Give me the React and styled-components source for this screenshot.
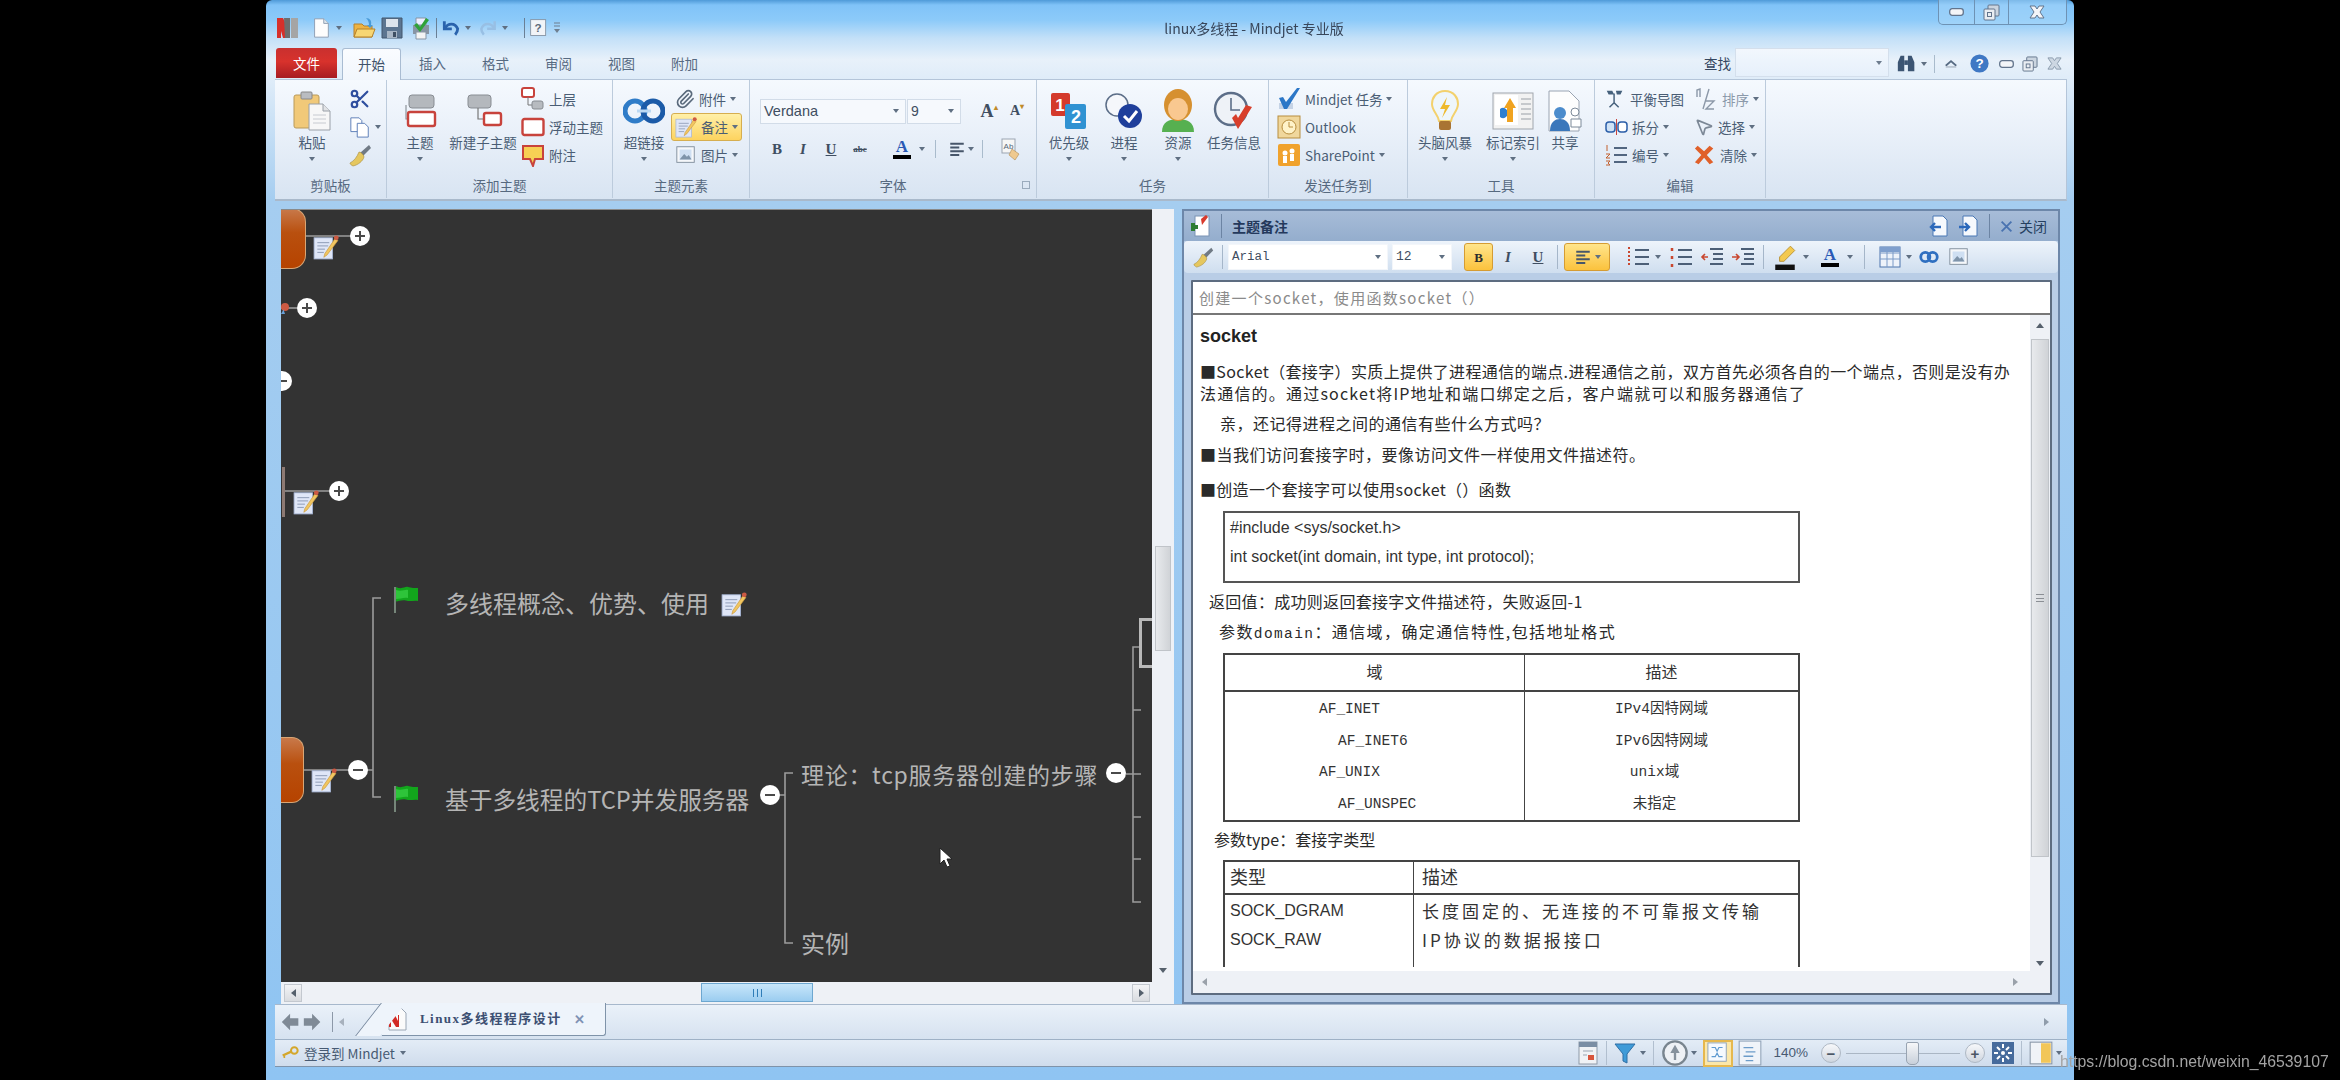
import React from 'react';
import styled, { createGlobalStyle } from 'styled-components';
import { Scissors, Paperclip, MousePointer2 } from 'lucide-react';

const CJK = `"Noto Sans CJK SC", "Noto Sans", sans-serif`;

const Global = createGlobalStyle`
  html, body { margin: 0; padding: 0; background: #000; }
  body { width: 2340px; height: 1080px; overflow: hidden; font-family: ${CJK}; }
  * { box-sizing: border-box; }
`;

const Page = styled.div`
  position: relative; width: 2340px; height: 1080px; background: #000; padding-left: 266px; overflow: hidden;
`;
const Watermark = styled.div`
  position: absolute; left: 2060px; top: 1050px; font: 15.8px/24px "Liberation Sans", sans-serif; color: #a3a3a3; filter: blur(.5px);
`;
const Win = styled.div`
  width: 1808px; height: 1080px; display: flex; flex-direction: column; border-radius: 6px 6px 0 0; filter: blur(.55px);
  background: linear-gradient(180deg, #4f9ad8 0, #80c3f8 5px, #8ccaf9 20px, #c3e0f8 38px, #e8f1fa 60px, #a5cdf0 200px, #8fc4f2 100%);
  padding: 0 7px 0 9px;
`;

/* ---------- title ---------- */
const TitleBar = styled.div`height: 48px; display: flex; align-items: center; padding-top: 8px; flex: none;`;
const Qat = styled.div`width: 295px; display: flex; align-items: center; gap: 4px; padding-left: 1px; flex: none;`;
const QSep = styled.i`width: 1px; height: 20px; background: #6a7f95; flex: none;`;
const TinyArrow = styled.span`
  width: 0; height: 0; border-left: 3px solid transparent; border-right: 3px solid transparent; border-top: 4px solid ${p => p.$c || '#5f6f82'};
  flex: none; display: inline-block; margin: ${p => p.$m || '0'};
`;
const WinTitle = styled.div`flex: 1; text-align: center; font: 14px/20px ${CJK}; color: #38465a;`;
const WinBtns = styled.div`
  width: 129px; height: 25px; align-self: flex-start; margin-top: -8px; flex: none; display: flex;
  border: 1px solid #6e92b4; border-top: 0; border-radius: 0 0 5px 5px;
  background: rgba(170,215,250,.5);
`;
const WinBtn = styled.div`
  flex: ${p => p.$w || 1}; display: flex; align-items: center; justify-content: center; border-left: ${p => p.$first ? '0' : '1px solid #6e92b4'};
`;

/* ---------- tabs ---------- */
const TabRow = styled.div`height: 31px; display: flex; align-items: stretch; flex: none; padding-left: 1px;`;
const FileTab = styled.div`
  width: 61px; height: 30px; background: linear-gradient(180deg, #c9302f, #d8322c 45%, #a71c22); color: #fff; font: 13.5px/30px ${CJK};
  text-align: center; border-radius: 3px 3px 0 0; margin-right: 5px;
`;
const Tab = styled.div`
  width: ${p => p.$active ? 59 : 63}px; text-align: center; font: 13.5px/30px ${CJK}; color: ${p => p.$active ? '#40526a' : '#566a82'};
  ${p => p.$active ? `background: linear-gradient(180deg,#fafcff,#f1f6fc); border: 1px solid #a9bcd2; border-bottom: 0; border-radius: 3px 3px 0 0; position: relative; z-index: 1; height: 32px;` : ''}
`;
const TabSpacer = styled.div`flex: 1;`;
const SearchLabel = styled.div`font: 13.5px/30px ${CJK}; color: #34465f; margin-right: 4px;`;
const SearchBox = styled.div`
  width: 154px; height: 29px; background: linear-gradient(180deg,#f2f7fd,#e6f0fb); border: 1px solid #d4dfec; display: flex; align-items: center; justify-content: flex-end; padding-right: 6px;
`;
const RightTools = styled.div`width: 178px; display: flex; align-items: center; padding-left: 7px; flex: none; gap: 0;`;
const VLine = styled.i`width: 1px; height: ${p => p.$h || 18}px; background: ${p => p.$c || '#a9bbcc'}; margin: ${p => p.$m || '0 8px'}; flex: none;`;
const Gap = styled.span`width: ${p => p.$w}px; flex: none;`;

/* ---------- ribbon ---------- */
const Ribbon = styled.div`
  width: 1792px; height: 122px; flex: none; display: flex; background: linear-gradient(180deg, #f5f9fe 0, #e9f0f9 45%, #d8e4f2 100%);
  border: 1px solid #b4c5d9; border-left: 0; border-bottom: 2px solid #a9b9cb;
`;
const Group = styled.div`
  width: ${p => p.$w}px; flex: none; display: flex; flex-direction: column; border-right: 1px solid ${p => p.$end ? 'transparent' : '#bccbdc'}; margin-bottom: 1px;
`;
const GroupBody = styled.div`flex: 1; display: flex; padding-left: ${p => p.$pl || 0}px; gap: ${p => p.$gap || 0}px;`;
const GroupLabel = styled.div`height: 24px; font: 13.5px/22px ${CJK}; text-align: center; color: #56697f; position: relative; margin-bottom: 0;`;
const Launcher = styled.span`position: absolute; right: 6px; top: 7px; width: 8px; height: 8px; border: 1px solid #9aabbd;`;
const Large = styled.div`
  width: ${p => p.$w}px; flex: none; display: flex; flex-direction: column; align-items: center; padding-top: 11px;
`;
const LargeIcon = styled.div`height: 40px; display: flex; align-items: center; justify-content: center;`;
const LargeText = styled.div`font: 13.5px/22px ${CJK}; color: #4a5d74; white-space: nowrap;`;
const LargeArrow = styled.div`height: 12px; display: flex; align-items: center;`;
const Stack = styled.div`width: ${p => p.$w ? p.$w + 'px' : 'auto'}; flex: none; display: flex; flex-direction: column; padding-top: 5px; margin-left: ${p => p.$ml || 0}px;`;
const Small = styled.div`
  height: 28px; display: flex; align-items: center; gap: 4px; font: 13.5px/20px ${CJK}; color: ${p => p.$dim ? '#8b99aa' : '#4a5d74'}; white-space: nowrap; position: relative;
  ${p => p.$hl ? `background: linear-gradient(180deg,#fff0a8,#fdd35f); border: 1px solid #d6ae50; border-radius: 3px; padding: 0 3px; margin-left: -4px; height: 28px;` : ''}
`;
const FontCol = styled.div`display: flex; flex-direction: column; padding: 18px 0 0 10px;`;
const FontRow = styled.div`display: flex; align-items: center; height: 26px;`;
const FontRow2 = styled(FontRow)`margin-top: 12px; padding-left: 4px;`;
const Combo = styled.div`
  width: ${p => p.$w}px; height: ${p => p.$h || 25}px; background: ${p => p.$bg || '#f6f9fd'}; border: 1px solid ${p => p.$bd || '#d2dce8'}; display: flex; align-items: center; justify-content: space-between;
  padding: 0 6px 0 3px; font: ${p => p.$fs || 14}px/20px ${p => p.$font || '"Liberation Sans", sans-serif'}; color: #3f4e61; margin-right: ${p => p.$mr ?? 1}px; flex: none;
`;
const Letter = styled.span`
  width: ${p => p.$w || 26}px; text-align: center; flex: none; font: ${p => p.$i ? 'italic' : ''} bold ${p => p.$fs || 15}px/20px "Liberation Serif", serif; color: ${p => p.$c || '#3f4e61'};
  margin-left: ${p => p.$ml || 0}px;
  text-decoration: ${p => p.$u ? 'underline' : 'none'}; ${p => p.$s ? 'text-decoration: line-through; font-size: 9px;' : ''}
`;
const Sup = styled.sup`font-size: 8px; line-height: 0; color: #c08a2a;`;
const ColorA = styled.span`
  display: inline-flex; flex-direction: column; align-items: center; width: 18px; font: bold 17px/15px "Liberation Serif", serif; color: #2a59b5; flex: none;
  &::after { content: ''; width: 18px; height: 4px; background: ${p => p.$bar || '#000'}; margin-top: 1px; }
`;

/* ---------- main ---------- */
const Main = styled.div`
  height: 795px; flex: none; margin: 8px 0 0 6px; width: 1785px; display: flex; gap: 8px;
`;
const MapPane = styled.div`width: 893px; height: 795px; flex: none; display: flex; flex-direction: column; background: #eef0f5;`;
const MapTop = styled.div`height: 773px; display: flex; flex: none;`;
const Canvas = styled.div`
  position: relative; width: 871px; height: 773px; background: #333333; overflow: hidden; border-top: 1px solid #8a8a8a; flex: none;
`;
const Lines = styled.svg`position: absolute; left: 0; top: 0;`;
const VScroll = styled.div`
  width: ${p => p.$w}px; flex: none; background: #eef1f6; display: flex; flex-direction: column; align-items: center; position: relative;
  padding-top: ${p => p.$pt}px;
`;
const Thumb = styled.div`
  width: ${p => p.$w}px; height: ${p => p.$h}px; flex: none; background: linear-gradient(90deg,#e8eaed,#d0d3d7); border: 1px solid #c0c4c9; display: flex; align-items: center; justify-content: center;
  margin-bottom: auto;
`;
const Grip = styled.i`width: 8px; height: 8px; border-top: 1px solid #8b8f95; border-bottom: 1px solid #8b8f95; position: relative;
  &::after { content: ''; position: absolute; left: 0; right: 0; top: 3px; height: 1px; background: #8b8f95; }
`;
const Arrow = styled.i`
  width: 0; height: 0; flex: none; margin-bottom: ${p => p.$mb || 0}px;
  border-left: 4px solid transparent; border-right: 4px solid transparent;
  ${p => p.$up ? 'border-bottom' : 'border-top'}: 5px solid #55606c;
`;
const HScroll = styled.div`
  height: ${p => p.$h}px; flex: none; background: #eef1f6; display: flex; align-items: center; padding: 0 ${p => p.$pr}px 0 ${p => p.$pl}px; position: relative; justify-content: space-between;
`;
const HBtn = styled.div`
  width: 18px; height: 18px; background: linear-gradient(180deg,#f3f4f6,#d9dce0); border: 1px solid #c3c8cf; display: flex; align-items: center; justify-content: center; flex: none;
`;
const HArrow = styled.i`
  width: 0; height: 0; flex: none; border-top: 4px solid transparent; border-bottom: 4px solid transparent;
  ${p => p.$left ? 'border-right' : 'border-left'}: 5px solid ${p => p.$c || '#55606c'};
`;
const HThumb = styled.div`
  position: absolute; left: 420px; top: 1px; width: 112px; height: 19px; background: linear-gradient(180deg,#c8e6fa,#9bcdf0); border: 1px solid #6da7d0; display: flex; align-items: center; justify-content: center;
`;
const Grip2 = styled.i`width: 9px; height: 8px; border-left: 1px solid #2f7db8; border-right: 1px solid #2f7db8; position: relative;
  &::after { content: ''; position: absolute; top: 0; bottom: 0; left: 3px; width: 1px; background: #2f7db8; }
`;

/* canvas items: free-placed map nodes */
const At = styled.div.attrs(p => ({ style: { left: p.$x, top: p.$y } }))`
  position: absolute; transform: translateY(-50%); line-height: 0;
`;
const Topic = styled.div.attrs(p => ({ style: { left: p.$x, top: p.$y } }))`
  position: absolute; transform: translateY(-50%); white-space: nowrap; color: #b5b5b5;
  font: ${p => p.$fs || 24}px/32px ${CJK}; letter-spacing: ${p => p.$ls || 0}px;
`;
const Root = styled.div.attrs(p => ({ style: { top: p.$y, width: p.$w, height: p.$h } }))`
  position: absolute; left: 0; background: linear-gradient(180deg,#c8794a,#b9500f 40%,#b64300);
  border: 1px solid #d9a675; border-left: 0; border-radius: 0 ${p => p.$r}px ${p => p.$r}px 0;
`;
const Toggle = styled.div.attrs(p => ({ style: { left: p.$x - 10, top: p.$y - 10 } }))`
  position: absolute; width: 20px; height: 20px; border-radius: 50%; background: #fff; display: flex; align-items: center; justify-content: center;
  &::before { content: ''; position: absolute; width: 10px; height: 2px; background: #4a4a4a; }
  ${p => p.$plus ? `&::after { content: ''; position: absolute; width: 2px; height: 10px; background: #4a4a4a; }` : ''}
`;
const Bar = styled.div`position: absolute; left: 1px; top: 257px; width: 3px; height: 50px; background: #8d7a74;`;
const CutBox = styled.div`position: absolute; left: 858px; top: 408px; width: 14px; height: 50px; border: 3px solid #b9b9b9; border-right: 0; background: #333;`;
const Cursor = styled.div`position: absolute; left: 658px; top: 637px; line-height: 0;`;

/* ---------- note panel ---------- */
const NotePanel = styled.div`
  width: 878px; height: 795px; flex: none; background: #b9cde6; border: 2px solid #6d87a9; display: flex; flex-direction: column;
`;
const NoteHead = styled.div`
  height: 30px; flex: none; background: linear-gradient(180deg,#a7bcd8,#94adcd); display: flex; align-items: center; padding: 0 11px 0 5px;
`;
const NoteTitle = styled.div`font: bold 14px/20px ${CJK}; color: #24395c; flex: 1;`;
const CloseText = styled.div`font: 14px/20px ${CJK}; color: #26405f; margin-left: 10px; display: flex; align-items: center; gap: 6px;`;
const NoteTools = styled.div`
  height: 32px; flex: none; background: linear-gradient(180deg,#eef4fb,#cfdeef); display: flex; align-items: center; padding-left: 9px; border-radius: 4px; position: relative;
`;
const HlBox = styled.div`
  width: ${p => p.$w}px; height: 28px; flex: none; background: linear-gradient(180deg,#ffe58c,#fbc23d); border: 1px solid #d59c33; border-radius: 3px; display: flex; align-items: center; justify-content: center; gap: 3px;
  margin-right: ${p => p.$mr || 0}px; font: bold 13px/1 "Liberation Serif", serif; color: #2d2d2d;
`;
const NoteFrame = styled.div`
  margin: 7px 6px 7px 7px; flex: 1; min-height: 0; border: 2px solid #5d6c80; background: #fff; display: flex; flex-direction: column; border-radius: 1px;
`;
const Subject = styled.div`
  height: 33px; flex: none; border-bottom: 2px solid #777; font: 15px/31px ${CJK}; letter-spacing: 1.3px; color: #8b8b8b; padding-left: 6px;
`;
const NoteBody = styled.div`flex: 1; min-height: 0; display: flex;`;
const Doc = styled.div`flex: 1; overflow: hidden; padding: 7px 0 0 7px; color: #222; white-space: nowrap; min-width: 0;`;
const DocTitle = styled.div`font: bold 18px/28px "Liberation Sans", sans-serif; color: #222;`;
const P = styled.div`
  font: 16px/22px ${CJK}; margin-top: ${p => p.$mt}px; margin-left: ${p => p.$ml || 0}px; color: #2a2a2a; letter-spacing: ${p => p.$ls || 0}px;
`;
const Mono = styled.span`font-family: "Liberation Mono", monospace; font-size: 14.5px;`;
const CodeBox = styled.div`
  margin: 11px 0 0 23px; width: 577px; height: 72px; border: 2px solid #555; padding: 0 5px; font: 16px/29px "Liberation Sans", sans-serif; color: #333;
`;
const DomainTable = styled.div`
  margin: 8px 0 0 23px; width: 577px; height: 169px; border: 2px solid #444; display: grid; grid-template-columns: 300px 1fr; grid-template-rows: 37px 1fr;
`;
const Head = styled.div`
  display: flex; align-items: center; border-bottom: 2px solid #444; border-right: ${p => p.$r ? '1px solid #444' : '0'}; padding-bottom: 3px;
  padding-left: ${p => p.$pl || 0}px; justify-content: ${p => p.$pl ? 'flex-start' : 'center'}; font: ${p => p.$fs || 16}px/22px ${CJK}; color: #333;
`;
const CellCol = styled.div`
  display: flex; flex-direction: column; padding-top: 1px; border-right: ${p => p.$r ? '1px solid #444' : '0'};
`;
const RowLine = styled.div`
  height: 31.6px; font: 14.5px/32px "Liberation Mono", ${CJK}; color: #333;
  ${p => p.$pl !== undefined ? `padding-left: ${p.$pl}px;` : `text-align: center; padding-right: ${p.$pr || 0}px;`}
`;
const TypeTable = styled.div`
  margin: 10px 0 0 23px; width: 577px; height: 107px; border: 2px solid #444; border-bottom: 0; display: grid; grid-template-columns: 189px 1fr; grid-template-rows: 33px 1fr;
`;
const TypeCell = styled.div`
  padding: 1px 0 0 ${p => p.$pl}px; border-right: ${p => p.$r ? '1px solid #444' : '0'}; font: ${p => p.$fs || 16}px/29px ${p => p.$cjk ? CJK : `"Liberation Sans", sans-serif`}; color: #333; letter-spacing: ${p => p.$ls || 0}px;
`;

/* ---------- bottom ---------- */
const DocBar = styled.div`
  height: 36px; flex: none; width: 1792px; background: linear-gradient(180deg,#eaf1f9,#d6e2f0); border-top: 1px solid #a7b8cc; display: flex; align-items: center; padding-left: 5px; border-bottom: 1px solid #9eb1c6; position: relative;
`;
const DocTab = styled.div`
  position: relative; margin-left: 38px; margin-top: -5px; width: 224px; height: 33px; background: #eef4fb; border-right: 1px solid #7f93a9; border-bottom: 1px solid #7f93a9; display: flex; align-items: center; padding-left: 3px; border-radius: 0 0 3px 0;
  &::before { content: ''; position: absolute; left: -14px; top: 0; bottom: -1px; width: 24px; background: #eef4fb; border-left: 1px solid #6f8198; transform: skewX(-38deg); z-index: 0; }
`;
const DocName = styled.div`font: bold 13px/20px "Liberation Serif", ${CJK}; color: #3c4f72; margin-left: 11px; position: relative; letter-spacing: 1.45px;`;
const DocClose = styled.div`margin-left: 12px; color: #7f92b4; font: bold 13px/1 "Liberation Sans", sans-serif;`;
const BarEnd = styled.div`margin-left: auto; margin-right: 18px; display: flex;`;
const Status = styled.div`
  height: 27px; flex: none; width: 1792px; background: linear-gradient(180deg,#e3ecf6,#cfdcec); border-bottom: 1px solid #7f93a9; display: flex; align-items: center; padding-left: 6px;
`;
const StatusText = styled.div`font: 13.5px/20px ${CJK}; color: #475a72; margin-left: 3px;`;
const StatusRight = styled.div`margin-left: auto; display: flex; align-items: center; margin-right: 5px; height: 100%;`;
const StatSep = styled.i`width: 1px; height: 24px; background: #b1bfcf; flex: none; margin: 0 ${p => p.$m || 7}px;`;
const ZoomText = styled.div`font: 13.5px/20px "Liberation Sans", sans-serif; color: #475a72; margin: 0 13px 0 10px;`;
const RoundBtn = styled.div`
  width: 20px; height: 20px; border-radius: 50%; background: linear-gradient(180deg,#f7f8fa,#cfd6df); border: 1px solid #aeb8c4; display: flex; align-items: center; justify-content: center; font: bold 15px/1 "Liberation Sans", sans-serif; color: #4c5765; flex: none;
`;
const Slider = styled.div`
  width: 114px; height: 1px; background: #aab6c4; margin: 0 5px; position: relative; flex: none;
  &::after { content: ''; position: absolute; left: 60px; top: -11px; width: 11px; height: 21px; background: linear-gradient(180deg,#f6f7f9,#c8d0da); border: 1px solid #98a4b2; border-radius: 2px 2px 5px 5px; }
`;
const HlIcon = styled.div`
  width: 30px; height: 27px; border: 2px solid #e6b84e; background: #fbe7a9; display: flex; align-items: center; justify-content: center; flex: none; margin-right: 4px;
`;
const BottomEdge = styled.div`flex: 1;`;

/* ---------- icons ---------- */
const S = ({ s = 24, w, h, vb = '0 0 24 24', children }) => (
  <svg width={w || s} height={h || s} viewBox={vb} style={{ flex: 'none', display: 'block' }}>{children}</svg>
);
const NoteIcon = ({ s = 26 }) => (
  <S s={s}>
    <rect x="1" y="3.5" width="17" height="19.5" fill="#dfe6f7" stroke="#a7b6d6" strokeWidth=".8" />
    <path d="M4 8h11M4 11h10M4 14h7M4 17h6" stroke="#8d9ab5" strokeWidth=".9" />
    <path d="M20.5 4 11 18l-1 3.5 3-2.2L23 6z" fill="#f1c661" stroke="#c9973c" strokeWidth=".6" />
    <circle cx="21.5" cy="3.5" r="2.2" fill="#cc5a43" />
  </S>
);
const Flag = () => (
  <S s={28} vb="0 0 28 28">
    <path d="M2 2h2v26H2z" fill="#76867a" />
    <path d="M4 2c6 3 9-1 12 0 3 1 7 1 10 1v13c-4-1-8 1-12-.5-4-1-7 .5-10 1z" fill="#12a51c" />
    <path d="M4 5c6 2 9-1 12 0v8c-4-1-8 1-12 1z" fill="#2ec43a" />
  </S>
);
const Logo = () => (
  <S w={24} h={26} vb="0 0 24 26"><path d="M1 3h6l4 8v12H7L5 16v7H1z" fill="#d7302a" /><path d="M8 3h6v20H9z" fill="#6d6d6d" /><path d="M15 3h7v20h-7z" fill="#a5a5a5" /></S>
);
const NewDoc = () => (
  <S s={22}><path d="M5 2h10l5 5v15H5z" fill="#fdfdfd" stroke="#8b9bb0" /><path d="M15 2v5h5" fill="#dfe7ee" stroke="#8b9bb0" /></S>
);
const OpenIco = () => (
  <S s={24}><path d="M2 8h8l2 2h8v11H2z" fill="#eeb342" stroke="#b5812a" /><path d="M2 21 5 13h18l-3 8z" fill="#f7d673" stroke="#b5812a" /><path d="M14 2c4 0 6 3 5 7l2 0-3 3-3-3h2c0-3-1-5-3-7z" fill="#4a9bd8" /></S>
);
const SaveIco = () => (
  <S s={24}><path d="M2 2h20v20H2z" fill="#5c7590" stroke="#43566c" /><path d="M6 3h12v8H6z" fill="#dde4ec" /><path d="M7 15h10v7H7z" fill="#a8b6c5" /><path d="M13 16h3v5h-3z" fill="#3e4f62" /></S>
);
const PrintIco = () => (
  <S s={24}><path d="M5 9h16v9H5z" fill="#8795a4" /><path d="M8 16h10v7H8z" fill="#f4f4f4" stroke="#8795a4" /><path d="M8 2h10v7H8z" fill="#eef" stroke="#8795a4" /><path d="m9 7 3 4 6-9 3 2-9 12-6-7z" fill="#2fa23a" /></S>
);
const Undo = ({ c = '#2a63ad' }) => (
  <S s={20}><path d="M4 4v9h9" fill="none" stroke={c} strokeWidth="3.4" /><path d="M5 12c3-6 12-7 15 1 0 3-1 5-3 7" fill="none" stroke={c} strokeWidth="3.4" /></S>
);
const Redo = () => (
  <S s={20}><g transform="matrix(-1 0 0 1 24 0)"><path d="M4 4v9h9" fill="none" stroke="#98bfe4" strokeWidth="3" /><path d="M5 12c3-6 12-7 15 1 0 3-1 5-3 7" fill="none" stroke="#98bfe4" strokeWidth="3" /></g></S>
);
const HelpDoc = () => (
  <S s={20}><rect x="2" y="2" width="18" height="19" fill="#f1f4f8" stroke="#7f8d9c" /><text x="11" y="17" fontSize="14" fontFamily="Liberation Sans" fontWeight="bold" textAnchor="middle" fill="#5b6a7a">?</text></S>
);
const QatMenu = () => (
  <S w={8} h={14} vb="0 0 8 14"><path d="M1 2h6M1 5h6" stroke="#6f7f90" strokeWidth="1.2" /><path d="M1 8h6l-3 4z" fill="#6f7f90" /></S>
);
const Paste = () => (
  <S s={40} vb="0 0 40 40">
    <rect x="2" y="4" width="25" height="33" rx="2" fill="#f1c979" stroke="#b99a5b" />
    <rect x="9" y="1" width="11" height="7" rx="1" fill="#b9bcc1" stroke="#888" />
    <path d="M17 13h14l7 7v19H17z" fill="#f7f7f7" stroke="#9aa0a8" />
    <path d="M31 13v7h7" fill="#e1e3e6" stroke="#9aa0a8" />
    <path d="M21 24h13M21 28h13M21 32h13" stroke="#c7cad0" />
  </S>
);
const CopyI = () => (
  <S s={22}><path d="M2 2h9l3 3v12H2z" fill="#fff" stroke="#5779b5" /><path d="M9 8h8l4 4v11H9z" fill="#fff" stroke="#5779b5" /></S>
);
const Brush = ({ s = 24 }) => (
  <S s={s}><path d="M20 2 22 5 14 13l-3-3z" fill="#707a85" /><path d="M10 9c2 0 5 3 5 5-1 4-6 8-11 9-2-1-3-2-3-3 4-2 7-6 9-11z" fill="#e5c75f" stroke="#a68a3a" strokeWidth=".6" /></S>
);
const TopicI = () => (
  <S s={40} vb="0 0 40 40">
    <path d="M6 14v14h4" fill="none" stroke="#8d939a" strokeWidth="1.2" />
    <rect x="9" y="4" width="25" height="13" rx="3" fill="#b4b8bd" stroke="#888d93" />
    <rect x="8" y="21" width="27" height="14" rx="2" fill="#fff" stroke="#c8433c" strokeWidth="2.4" />
  </S>
);
const SubI = () => (
  <S s={40} vb="0 0 40 40">
    <rect x="5" y="4" width="23" height="13" rx="3" fill="#b4b8bd" stroke="#888d93" />
    <path d="M15 17v11h6" fill="none" stroke="#777" strokeWidth="1.2" />
    <rect x="21" y="22" width="17" height="12" rx="2" fill="#fff" stroke="#c8433c" strokeWidth="2.4" />
  </S>
);
const UpI = () => (
  <S s={24}><rect x="1" y="1" width="12" height="9" rx="2" fill="#fff" stroke="#c8433c" strokeWidth="2" /><path d="M7 10v8h4" fill="none" stroke="#777" /><rect x="11" y="14" width="11" height="8" rx="2" fill="#b7bbc0" stroke="#868b91" /></S>
);
const FloatI = () => (
  <S s={24}><rect x="1.5" y="4" width="21" height="16" rx="2" fill="#fff" stroke="#c8433c" strokeWidth="2.4" /></S>
);
const CalloutI = () => (
  <S s={24}><path d="M2 3h20v13h-8l-2 7-3-7H2z" fill="#f7d054" stroke="#c8433c" strokeWidth="2" /></S>
);
const LinkI = () => (
  <S s={42} vb="0 0 42 42">
    <circle cx="12" cy="21" r="10" fill="none" stroke="#2f7cc8" strokeWidth="5" />
    <circle cx="30" cy="21" r="10" fill="none" stroke="#1c5ba8" strokeWidth="5" />
    <path d="M14 21h14" stroke="#bcd9f3" strokeWidth="3" />
  </S>
);
const PicI = () => (
  <S s={22}><rect x="2" y="3" width="19" height="17" fill="#f5f7fa" stroke="#7f8c9b" /><rect x="5" y="6" width="13" height="11" fill="#cfdff2" /><path d="m5 17 5-6 3 3 2-2 3 5z" fill="#7f94aa" /></S>
);
const Priority = () => (
  <S s={42} vb="0 0 42 42">
    <rect x="3" y="3" width="19" height="23" rx="2" fill="#d43a2c" /><text x="12" y="21" fontSize="17" fontWeight="bold" fontFamily="Liberation Sans" fill="#fff" textAnchor="middle">1</text>
    <rect x="17" y="14" width="21" height="25" rx="2" fill="#3092d2" /><text x="28" y="33" fontSize="18" fontWeight="bold" fontFamily="Liberation Sans" fill="#fff" textAnchor="middle">2</text>
  </S>
);
const Process = () => (
  <S s={42} vb="0 0 42 42">
    <circle cx="14" cy="15" r="11" fill="#f5f7fb" stroke="#5c6e88" strokeWidth="1.5" />
    <circle cx="27" cy="26" r="12" fill="#1f3f9b" />
    <path d="m21 26 5 5 8-10" fill="none" stroke="#fff" strokeWidth="3" />
  </S>
);
const Person = () => (
  <S s={44} vb="0 0 44 44">
    <path d="M6 43c0-10 7-13 16-13s16 3 16 13z" fill="#56b050" />
    <ellipse cx="22" cy="16" rx="14" ry="16" fill="#d69030" />
    <ellipse cx="22" cy="20" rx="10" ry="11" fill="#f9c890" />
  </S>
);
const TaskI = () => (
  <S s={44} vb="0 0 44 44">
    <circle cx="19" cy="20" r="16" fill="#eef2f7" stroke="#5c6e88" strokeWidth="2.4" />
    <path d="M19 9v12h9" fill="none" stroke="#5c6e88" strokeWidth="1.6" />
    <path d="m20 29 6 11L40 18l-6-2-8 13-2-4z" fill="#d83f2b" />
  </S>
);
const CheckI = () => (
  <S s={24}><rect x="2" y="16" width="14" height="6" fill="#c5d3e6" /><path d="m2 11 4-1 3 5L20 1h3L10 22H7z" fill="#2c77c7" /></S>
);
const OutlookI = () => (
  <S s={24}><rect x="1" y="1" width="22" height="22" fill="#f0d79c" stroke="#b78d3e" /><circle cx="12" cy="12" r="7" fill="#fff3c9" stroke="#b78d3e" /><path d="M12 7v5h4" fill="none" stroke="#b78d3e" /></S>
);
const SpI = () => (
  <S s={24}><rect x="1" y="1" width="22" height="22" rx="2" fill="#f0a22d" /><circle cx="8" cy="10" r="2.5" fill="#fff" /><circle cx="15" cy="8" r="2.5" fill="#fff" /><path d="M6 20v-7h4v7zM13 18v-7h4v7z" fill="#fff" /></S>
);
const Bulb = () => (
  <S s={44} vb="0 0 44 44">
    <path d="M22 2c9 0 13 7 13 13 0 7-6 10-7 17H16c-1-7-7-10-7-17C9 9 13 2 22 2z" fill="#eef6fb" stroke="#f3d16d" strokeWidth="2" />
    <path d="M24 8 17 20h5l-3 9 8-13h-5z" fill="#eeb92c" />
    <rect x="16" y="32" width="12" height="9" rx="2" fill="#a97433" />
  </S>
);
const IndexI = () => (
  <S s={44} vb="0 0 44 44">
    <rect x="2" y="4" width="40" height="36" fill="#f2f2f2" stroke="#a0a6ad" />
    <rect x="4" y="6" width="23" height="30" fill="#fff" />
    <path d="M9 20a5 5 0 1 1 0 8z" fill="#2e7fd0" />
    <path d="m19 9 6 10h-3v14h-6V19h-3z" fill="#f0a320" />
    <path d="M30 10h10M30 15h10M30 20h10M30 25h10M30 30h10" stroke="#9aa0a7" />
  </S>
);
const ShareI = () => (
  <S s={44} vb="0 0 44 44">
    <path d="M6 2h20l10 10v30H6z" fill="#fdfdfd" stroke="#9aa4b2" />
    <circle cx="17" cy="24" r="6" fill="#4c8ccc" /><path d="M7 42c0-9 5-12 10-12s10 3 10 12z" fill="#3b77bb" />
    <circle cx="32" cy="23" r="4" fill="#fff" stroke="#7d8a99" /><path d="M28 38v-8h10v8z" fill="#fff" stroke="#7d8a99" />
  </S>
);
const BalanceI = () => (
  <S s={22}><path d="M3 3h6l2 4H5zM13 3h7l-2 4h-4z" fill="#46617c" /><path d="M11 6v10M6 21l5-5 5 5" stroke="#46617c" strokeWidth="1.6" fill="none" /></S>
);
const SplitI = () => (
  <S s={24}><rect x="2" y="7" width="9" height="10" rx="3" fill="#cfe2f6" stroke="#2b5ea8" strokeWidth="1.5" /><rect x="14" y="7" width="9" height="10" rx="3" fill="#fff" stroke="#2b5ea8" strokeWidth="1.5" /><path d="M12.5 4v16" stroke="#c8433c" /></S>
);
const NumberI = () => (
  <S s={24}><path d="M3 2v6M2 11h4l-4 4h4M2 18h4l-2 2 2 2H2" stroke="#c2612e" fill="none" /><path d="M10 5h13M10 12h13M10 19h13" stroke="#526680" strokeWidth="1.8" /></S>
);
const SortI = () => (
  <S s={24}><path d="M3 10V3l3-1v8M15 2l-6 20" stroke="#8c98a8" fill="none" strokeWidth="1.4" /><path d="M12 14h8l-8 8h8" stroke="#8c98a8" fill="none" strokeWidth="1.4" /></S>
);
const XRed = () => (
  <S s={22}><path d="M4 2 11 8l6-6 4 3-7 7 7 8-4 2-6-7-6 7-4-2 7-8-7-7z" fill="#e0602a" /></S>
);
const Bino = () => (
  <S s={22}><path d="M2 20V10l3-7h4v17zM13 20V3h4l3 7v10z" fill="#3c5573" /><path d="M9 8h4v5H9z" fill="#3c5573" /></S>
);
const MinI = ({ w = 15 }) => <S w={w} h={8} vb="0 0 15 8"><rect x=".7" y=".7" width="13.6" height="6.6" rx="2.5" fill="#f3f5f8" stroke="#62748c" strokeWidth="1.3" /></S>;
const RestoreI = ({ s = 17 }) => (
  <S s={s} vb="0 0 17 17"><rect x="5" y="1" width="11" height="11" rx="1" fill="#cbd5e0" stroke="#62748c" /><rect x="1" y="5" width="11" height="11" rx="1" fill="#e9edf2" stroke="#62748c" /><rect x="4.5" y="8.5" width="4" height="4" fill="none" stroke="#62748c" /></S>
);
const CloseI = ({ c = '#f3f5f8', b = '#62748c', s = 16 }) => (
  <S s={s} vb="0 0 16 16"><path d="M1 2h5l2 3 2-3h5l-4 6 4 6h-5l-2-3-2 3H1l4-6z" fill={c} stroke={b} /></S>
);
const Chev = () => <S s={14}><path d="m3 15 9-8 9 8" stroke="#566a82" strokeWidth="3" fill="none" /><path d="M3 17h18" stroke="#b9c4d0" strokeWidth="3" /></S>;
const Help = () => (
  <S s={19}><circle cx="12" cy="12" r="11.5" fill="#3f78c4" /><text x="12" y="18" fontSize="17" fontWeight="bold" fontFamily="Liberation Sans" textAnchor="middle" fill="#fff">?</text></S>
);
const AlignI = ({ c = '#47566a', s = 18 }) => <S s={s}><path d="M3 5h18M3 10h12M3 15h18M3 20h12" stroke={c} strokeWidth="2.4" /></S>;
const PaintFmt = () => <S s={24}><rect x="3" y="2" width="13" height="14" fill="#f6f6f6" stroke="#9ba5b2" /><text x="9.5" y="12" fontSize="8" textAnchor="middle" fontFamily="Liberation Sans" fill="#567">Ab</text><path d="m13 12 7 5-4 6-6-5z" fill="#efc98f" stroke="#b08b52" strokeWidth=".6" /></S>;
const Back = ({ c }) => <S s={22}><path d="M11 3v5h9v8h-9v5L2 12z" fill={c} /></S>;
const Fwd = ({ c }) => <S s={22}><path d="M11 3v5H2v8h9v5l9-9z" fill={c} /></S>;
const TabDoc = () => (
  <S s={24}><path d="M4 1h12l5 5v17H4z" fill="#fbfbfb" stroke="#9aa6b5" /><path d="M4 8h6l3 6V8h1v12h-3L6 12v8H4z" fill="#d22a25" /></S>
);
const Key = () => <S s={20}><circle cx="16" cy="9" r="4" fill="none" stroke="#d4a72c" strokeWidth="2.4" /><path d="M13 10 2 15" stroke="#d4a72c" strokeWidth="2.8" /><path d="M4 15v3" stroke="#d4a72c" strokeWidth="2" /></S>;
const ListNum = () => <S s={24}><path d="M3 2v20" stroke="#c9472f" strokeDasharray="2 2" strokeWidth="2" /><path d="M9 5h14M9 12h14M9 19h14" stroke="#4c5f77" strokeWidth="2.2" /></S>;
const ListBul = () => <S s={24}><path d="M3 3v3M3 11v3M3 19v3" stroke="#c9472f" strokeWidth="2.5" /><path d="M9 5h14M9 12h14M9 19h14" stroke="#4c5f77" strokeWidth="2.2" /></S>;
const Indent = ({ out }) => (
  <S s={24}><path d="M10 4h13M13 9h10M13 14h10M10 19h13" stroke="#4c5f77" strokeWidth="2" /><path d={out ? 'M8 12H2m3-3-3 3 3 3' : 'M1 12h7M5 9l3 3-3 3'} stroke="#c9472f" strokeWidth="1.6" fill="none" /></S>
);
const Hilite = () => <S s={26}><path d="M17 2 21 6 11 16H7v-4z" fill="#f3c94f" stroke="#b78d2c" strokeWidth=".8" /><rect x="3" y="19" width="18" height="5" fill="#111" /></S>;
const TableI = () => <S s={24}><rect x="2" y="2" width="20" height="20" fill="#eef3fa" stroke="#4d74ad" /><path d="M2 8h20M2 14h20M9 2v20M15 2v20" stroke="#7b9ac7" /><path d="M2 2h20v5H2z" fill="#7f9fcd" /></S>;
const SmallLink = () => <S s={22}><circle cx="8" cy="12" r="5" fill="none" stroke="#2f6fc0" strokeWidth="3" /><circle cx="16" cy="12" r="5" fill="none" stroke="#2f6fc0" strokeWidth="3" /></S>;
const PanelGo = () => (
  <S s={24}><rect x="6" y="2" width="14" height="20" fill="#fff" stroke="#7b93b4" /><path d="M2 13h7M4 9v8" stroke="#2e7d32" strokeWidth="4" /><path d="m12 5 5-4 2 2-6 8z" fill="#d83a2c" /></S>
);
const ExportDoc = ({ flip }) => (
  <S s={24}><path d="M6 2h10l4 4v16H6z" fill="#f6f9fd" stroke="#4a78b5" /><path d={flip ? 'M2 13h9M8 9l4 4-4 4' : 'M14 13H4M8 9l-4 4 4 4'} stroke="#2c69bb" strokeWidth="2.4" fill="none" /></S>
);
const ReportI = () => <S s={24}><rect x="3" y="1" width="18" height="22" fill="#f0f2f5" stroke="#8e9aa8" /><rect x="3" y="1" width="18" height="5" fill="#7b8ea4" /><path d="M7 10h10M7 14h4" stroke="#9aa5b1" /><rect x="12" y="14" width="6" height="5" fill="#d8553c" /></S>;
const FilterI = () => <S s={24}><path d="M2 3h20l-8 10v9l-4-2v-7z" fill="#3f9bd8" stroke="#2f6fa5" /></S>;
const ClockI = () => <S s={28}><circle cx="12" cy="12" r="10" fill="#eef1f5" stroke="#79858f" strokeWidth="2" /><path d="m12 5 4 7h-3v6h-2v-6H8z" fill="#86919c" /></S>;
const MapFit = () => <S s={22}><rect x="1" y="1" width="20" height="20" fill="#f5f9fe" stroke="#8ba0b8" /><path d="M5 6h4l2 4 2-4h4M5 16h4l2-4 2 4h4" stroke="#5e9ad0" fill="none" strokeWidth="1.3" /></S>;
const OutlineI = () => <S s={26}><rect x="2" y="1" width="20" height="22" fill="#f0f4f9" stroke="#93a5b9" /><path d="M6 7h9M8 11h9M6 15h9M8 19h7" stroke="#6c9cc9" strokeWidth="1.3" /></S>;
const Fit = () => <S s={24}><rect x="1" y="1" width="22" height="22" fill="#466b9c" /><circle cx="12" cy="12" r="2" fill="#fff" /><path d="M12 3v4M12 17v4M3 12h4M17 12h4M6 6l3 3M18 6l-3 3M6 18l3-3M18 18l-3-3" stroke="#fff" strokeWidth="2" /></S>;
const PanelI = () => <S s={26}><rect x="2" y="2" width="20" height="20" fill="#f0f3f7" stroke="#8a98a8" /><rect x="12" y="3" width="9" height="18" fill="#f2c658" /></S>;
const Pin = () => <S s={12}><circle cx="12" cy="10" r="8" fill="#cc5a43" /><path d="M9 15 4 24h8z" fill="#6aa1d8" /></S>;

const L = ({ w, label, children, arrow }) => (
  <Large $w={w}>
    <LargeIcon>{children}</LargeIcon>
    <LargeText>{label}</LargeText>
    {arrow && <LargeArrow><TinyArrow /></LargeArrow>}
  </Large>
);

export default function App() {
  return (
    <Page>
      <Global />
      <Win>
        <TitleBar>
          <Qat>
            <Logo />
            <Gap $w={2} />
            <NewDoc /><TinyArrow />
            <Gap $w={2} />
            <OpenIco /><SaveIco /><PrintIco />
            <QSep />
            <Undo /><TinyArrow $m="0 3px 0 0" /><Redo /><TinyArrow $m="0 12px 0 0" />
            <QSep />
            <HelpDoc /><QatMenu />
          </Qat>
          <WinTitle>linux多线程 - Mindjet 专业版</WinTitle>
          <WinBtns>
            <WinBtn $first $w={36}><MinI /></WinBtn>
            <WinBtn $w={34}><RestoreI /></WinBtn>
            <WinBtn $w={59}><CloseI /></WinBtn>
          </WinBtns>
        </TitleBar>
        <TabRow>
          <FileTab>文件</FileTab>
          <Tab $active>开始</Tab>
          <Tab>插入</Tab><Tab>格式</Tab><Tab>审阅</Tab><Tab>视图</Tab><Tab>附加</Tab>
          <TabSpacer />
          <SearchLabel>查找</SearchLabel>
          <SearchBox><TinyArrow $c="#6d7c8e" /></SearchBox>
          <RightTools>
            <Bino /><TinyArrow $m="0 0 0 3px" /><VLine $m="0 9px 0 7px" />
            <Chev /><Gap $w={12} />
            <Help /><Gap $w={10} />
            <MinI /><Gap $w={8} />
            <RestoreI s={16} /><Gap $w={9} />
            <CloseI c="#cdd7e2" b="#8a9aac" s={15} />
          </RightTools>
        </TabRow>
        <Ribbon>
          <Group $w={112}>
            <GroupBody>
              <L w={74} label="粘贴" arrow><Paste /></L>
              <Stack>
                <Small><Scissors size={22} color="#2f4f9f" strokeWidth={2.4} /></Small>
                <Small><CopyI /><TinyArrow /></Small>
                <Small><Brush /></Small>
              </Stack>
            </GroupBody>
            <GroupLabel>剪贴板</GroupLabel>
          </Group>
          <Group $w={226}>
            <GroupBody $pl={5}>
              <L w={56} label="主题" arrow><TopicI /></L>
              <L w={70} label="新建子主题"><SubI /></L>
              <Stack $ml={3}>
                <Small><UpI />上层</Small>
                <Small><FloatI />浮动主题</Small>
                <Small><CalloutI />附注</Small>
              </Stack>
            </GroupBody>
            <GroupLabel>添加主题</GroupLabel>
          </Group>
          <Group $w={137}>
            <GroupBody>
              <L w={62} label="超链接" arrow><LinkI /></L>
              <Stack>
                <Small><Paperclip size={20} color="#5a6a7c" />附件<TinyArrow /></Small>
                <Small $hl><NoteIcon s={22} />备注<TinyArrow /></Small>
                <Small><PicI />图片<TinyArrow /></Small>
              </Stack>
            </GroupBody>
            <GroupLabel>主题元素</GroupLabel>
          </Group>
          <Group $w={287}>
            <GroupBody>
              <FontCol>
                <FontRow>
                  <Combo $w={146} $fs={14.5}>Verdana<TinyArrow /></Combo>
                  <Combo $w={54}>9<TinyArrow /></Combo>
                  <Letter $w={30} $fs={18} $ml={12}>A<Sup>▴</Sup></Letter>
                  <Letter $w={26} $fs={14}>A<Sup>▾</Sup></Letter>
                </FontRow>
                <FontRow2>
                  <Letter $w={26}>B</Letter>
                  <Letter $w={26} $i>I</Letter>
                  <Letter $w={30} $u>U</Letter>
                  <Letter $w={28} $s>abc</Letter>
                  <VLine $c="transparent" $m="0 9px" />
                  <ColorA>A</ColorA><TinyArrow $m="0 0 0 8px" />
                  <VLine $m="0 12px 0 10px" />
                  <AlignI /><TinyArrow $m="0 0 0 2px" />
                  <VLine $m="0 16px 0 8px" />
                  <PaintFmt />
                </FontRow2>
              </FontCol>
            </GroupBody>
            <GroupLabel>字体<Launcher /></GroupLabel>
          </Group>
          <Group $w={232}>
            <GroupBody $pl={5}>
              <L w={54} label="优先级" arrow><Priority /></L>
              <L w={56} label="进程" arrow><Process /></L>
              <L w={52} label="资源" arrow><Person /></L>
              <L w={60} label="任务信息"><TaskI /></L>
            </GroupBody>
            <GroupLabel>任务</GroupLabel>
          </Group>
          <Group $w={139}>
            <GroupBody $pl={8}>
              <Stack>
                <Small><CheckI />Mindjet 任务<TinyArrow /></Small>
                <Small><OutlookI />Outlook</Small>
                <Small><SpI />SharePoint<TinyArrow /></Small>
              </Stack>
            </GroupBody>
            <GroupLabel>发送任务到</GroupLabel>
          </Group>
          <Group $w={187}>
            <GroupBody $pl={4}>
              <L w={66} label="头脑风暴" arrow><Bulb /></L>
              <L w={70} label="标记索引" arrow><IndexI /></L>
              <L w={34} label="共享"><ShareI /></L>
            </GroupBody>
            <GroupLabel>工具</GroupLabel>
          </Group>
          <Group $w={171}>
            <GroupBody $pl={9}>
              <Stack $w={90}>
                <Small><BalanceI />平衡导图</Small>
                <Small><SplitI />拆分<TinyArrow /></Small>
                <Small><NumberI />编号<TinyArrow /></Small>
              </Stack>
              <Stack>
                <Small $dim><SortI />排序<TinyArrow /></Small>
                <Small><MousePointer2 size={20} color="#7c8896" />选择<TinyArrow /></Small>
                <Small><XRed />清除<TinyArrow /></Small>
              </Stack>
            </GroupBody>
            <GroupLabel>编辑</GroupLabel>
          </Group>
          <Group $w={300} $end />
        </Ribbon>
        <Main>
          <MapPane>
            <MapTop>
              <Canvas>
                <Lines width="871" height="773">
                  <g stroke="#9c9c9c" strokeWidth="1.6" fill="none">
                    <path d="M25 26h55" />
                    <path d="M0 98h16" />
                    <path d="M4 281h44" />
                    <path d="M23 560h69" />
                    <path d="M100 388h-8V587h8" />
                    <path d="M512 563h-8V733h8M499 585h5" />
                    <path d="M860 437H852V692h8M852 500h8M852 607h8M852 649h8M845 564h15" />
                  </g>
                </Lines>
                <Root $y={-2} $w={25} $h={61} $r={14} />
                <At $x={32} $y={37}><NoteIcon /></At>
                <Toggle $x={79} $y={26} $plus />
                <At $x={-2} $y={98}><Pin /></At>
                <Toggle $x={26} $y={98} $plus />
                <Toggle $x={1} $y={171} />
                <Bar />
                <At $x={12} $y={292}><NoteIcon /></At>
                <Toggle $x={58} $y={281} $plus />
                <At $x={111} $y={389}><Flag /></At>
                <Topic $x={164} $y={393}>多线程概念、优势、使用</Topic>
                <At $x={440} $y={394}><NoteIcon /></At>
                <Root $y={527} $w={23} $h={66} $r={12} />
                <At $x={30} $y={570}><NoteIcon /></At>
                <Toggle $x={77} $y={560} />
                <At $x={111} $y={588}><Flag /></At>
                <Topic $x={164} $y={589} $fs={23.7}>基于多线程的TCP并发服务器</Topic>
                <Toggle $x={489} $y={585} />
                <Topic $x={520} $y={564} $fs={23} $ls={0.7}>理论：tcp服务器创建的步骤</Topic>
                <Toggle $x={835} $y={563} />
                <Topic $x={520} $y={733}>实例</Topic>
                <CutBox />
                <Cursor>
                  <S w={14} h={22} vb="0 0 14 22"><path d="M1 1v16l4-4 3 7 3-1-3-7h5z" fill="#fff" stroke="#222" /></S>
                </Cursor>
              </Canvas>
              <VScroll $w={22} $pt={337}>
                <Thumb $w={16} $h={105} />
                <Arrow $mb={9} />
              </VScroll>
            </MapTop>
            <HScroll $h={22} $pl={3} $pr={24}>
              <HBtn><HArrow $left /></HBtn>
              <HThumb><Grip2 /></HThumb>
              <HBtn><HArrow /></HBtn>
            </HScroll>
          </MapPane>
          <NotePanel>
            <NoteHead>
              <PanelGo />
              <VLine $c="#6c84a3" $h={24} $m="0 10px 0 8px" />
              <NoteTitle>主题备注</NoteTitle>
              <ExportDoc /><Gap $w={6} /><ExportDoc flip />
              <VLine $c="#6c84a3" $h={24} $m="0 0 0 8px" />
              <CloseText><S s={13}><path d="m3 3 18 18M21 3 3 21" stroke="#4a73b0" strokeWidth="3.4" /></S>关闭</CloseText>
            </NoteHead>
            <NoteTools>
              <Brush s={22} />
              <VLine $c="#a5b6c9" $h={24} $m="0 5px 0 7px" />
              <Combo $w={160} $h={26} $mr={4} $bg="#fff" $bd="#f3f6fa" $font={'"Liberation Mono", monospace'} $fs={12.5}>Arial<TinyArrow /></Combo>
              <Combo $w={60} $h={26} $bg="#fff" $bd="#f3f6fa" $font={'"Liberation Mono", monospace'} $fs={13}>12<TinyArrow /></Combo>
              <VLine $c="transparent" $m="0 5px 0 5px" />
              <HlBox $w={29}>B</HlBox>
              <Letter $w={30} $i $fs={15}>I</Letter>
              <Letter $w={30} $u $fs={15}>U</Letter>
              <VLine $c="#a5b6c9" $h={24} $m="0 6px 0 4px" />
              <HlBox $w={46} $mr={16}><AlignI s={18} /><TinyArrow /></HlBox>
              <ListNum /><TinyArrow $m="0 8px 0 5px" />
              <ListBul /><Gap $w={7} />
              <Indent out /><Gap $w={7} />
              <Indent />
              <VLine $c="#a5b6c9" $h={24} $m="0 8px 0 8px" />
              <Hilite /><TinyArrow $m="0 12px 0 5px" />
              <ColorA>A</ColorA><TinyArrow $m="0 0 0 8px" />
              <VLine $c="#a5b6c9" $h={24} $m="0 13px 0 11px" />
              <TableI /><TinyArrow $m="0 6px 0 4px" />
              <SmallLink /><Gap $w={8} />
              <PicI />
            </NoteTools>
            <NoteFrame>
              <Subject>创建一个socket，使用函数socket（）</Subject>
              <NoteBody>
                <Doc>
                  <DocTitle>socket</DocTitle>
                  <P $mt={10} $ls={0.36}>■Socket（套接字）实质上提供了进程通信的端点.进程通信之前，双方首先必须各自的一个端点，否则是没有办</P>
                  <P $mt={0} $ls={1.2}>法通信的。通过socket将IP地址和端口绑定之后，客户端就可以和服务器通信了</P>
                  <P $mt={8} $ml={20} $ls={0.5}>亲，还记得进程之间的通信有些什么方式吗？</P>
                  <P $mt={9} $ls={0.5}>■当我们访问套接字时，要像访问文件一样使用文件描述符。</P>
                  <P $mt={13} $ls={0.3}>■创造一个套接字可以使用socket（）函数</P>
                  <CodeBox>#include &lt;sys/socket.h&gt;<br />int socket(int domain, int type, int protocol);</CodeBox>
                  <P $mt={7} $ml={9} $ls={0.3}>返回值：成功则返回套接字文件描述符，失败返回-1</P>
                  <P $mt={8} $ml={19} $ls={1.4}>参数<Mono>domain</Mono>：通信域，确定通信特性,包括地址格式</P>
                  <DomainTable>
                    <Head $r>域</Head>
                    <Head>描述</Head>
                    <CellCol $r>
                      <RowLine $pl={94}>AF_INET</RowLine>
                      <RowLine $pl={113}>AF_INET6</RowLine>
                      <RowLine $pl={94}>AF_UNIX</RowLine>
                      <RowLine $pl={113}>AF_UNSPEC</RowLine>
                    </CellCol>
                    <CellCol>
                      <RowLine>IPv4因特网域</RowLine>
                      <RowLine>IPv6因特网域</RowLine>
                      <RowLine $pr={14}>unix域</RowLine>
                      <RowLine $pr={14}>未指定</RowLine>
                    </CellCol>
                  </DomainTable>
                  <P $mt={6} $ml={14}>参数type：套接字类型</P>
                  <TypeTable>
                    <Head $r $pl={5} $fs={18}>类型</Head>
                    <Head $pl={8} $fs={18}>描述</Head>
                    <TypeCell $r $pl={5}>SOCK_DGRAM<br />SOCK_RAW</TypeCell>
                    <TypeCell $pl={8} $cjk $fs={17} $ls={3}>长度固定的、无连接的不可靠报文传输<br />IP协议的数据报接口</TypeCell>
                  </TypeTable>
                </Doc>
                <VScroll $w={20} $pt={8}>
                  <Arrow $up $mb={11} />
                  <Thumb $w={18} $h={518}><Grip /></Thumb>
                  <Arrow $mb={5} />
                </VScroll>
              </NoteBody>
              <HScroll $h={22} $pl={9} $pr={32}>
                <HArrow $left $c="#9aa1aa" />
                <HArrow $c="#9aa1aa" />
              </HScroll>
            </NoteFrame>
          </NotePanel>
        </Main>
        <DocBar>
          <Back c="#7f8a96" /><Fwd c="#7f8a96" />
          <VLine $c="#8c98a8" $h={20} $m="0 6px 0 8px" />
          <HArrow $left $c="#a7b1bd" />
          <DocTab>
            <TabDoc />
            <DocName>Linux多线程程序设计</DocName>
            <DocClose>✕</DocClose>
          </DocTab>
          <BarEnd><HArrow $c="#8f9cab" /></BarEnd>
        </DocBar>
        <Status>
          <Key />
          <StatusText>登录到 Mindjet</StatusText>
          <TinyArrow $m="0 0 0 5px" />
          <StatusRight>
            <ReportI />
            <StatSep $m={6} />
            <FilterI /><TinyArrow $m="0 0 0 3px" />
            <StatSep $m={7} />
            <ClockI /><TinyArrow $m="0 6px 0 2px" />
            <HlIcon><MapFit /></HlIcon>
            <OutlineI />
            <ZoomText>140%</ZoomText>
            <RoundBtn>−</RoundBtn>
            <Slider />
            <RoundBtn>+</RoundBtn>
            <Gap $w={6} />
            <Fit />
            <StatSep $m={6} />
            <PanelI /><TinyArrow $m="0 0 0 2px" />
          </StatusRight>
        </Status>
        <BottomEdge />
      </Win>
      <Watermark>https://blog.csdn.net/weixin_46539107</Watermark>
    </Page>
  );
}
